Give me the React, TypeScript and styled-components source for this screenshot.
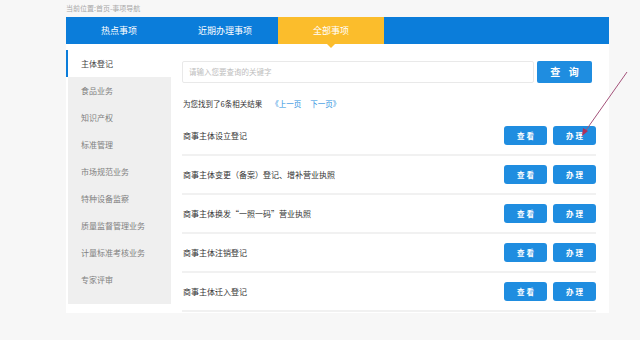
import styled, { createGlobalStyle } from "styled-components";

const GlobalStyle = createGlobalStyle`
  body {
    margin: 0;
    background: #f7f7f7;
    font-family: "Noto Sans CJK SC", "Noto Sans", sans-serif;
  }
`

const Page = styled.div`
  position: relative;
  width: 543px;
  padding-left: 66px;
  height: 340px;
`

const Breadcrumb = styled.div`
  height: 17px;
  line-height: 16px;
  font-size: 7px;
  color: #a8a8a8;
`

const TabBar = styled.div`
  display: flex;
  height: 27px;
  background: #0b7dda;
`

const Tab = styled.div<{ $active?: boolean }>`
  position: relative;
  width: 106px;
  line-height: 27px;
  text-align: center;
  font-size: 9px;
  color: #fff;
  background: ${p => (p.$active ? "#fbbd2c" : "transparent")};

  ${p => p.$active && `
    &::after {
      content: "";
      position: absolute;
      left: 50%;
      bottom: -4px;
      margin-left: -4px;
      border-left: 4px solid transparent;
      border-right: 4px solid transparent;
      border-top: 4px solid #fbbd2c;
    }
  `}
`

const Panel = styled.div`
  display: flex;
  align-items: flex-start;
  background: #fff;
  padding: 6px 13px 1px 2px;
`

const Sidebar = styled.div`
  width: 103px;
  background: #efefef;
  padding-bottom: 11px;
`

const SideItem = styled.div<{ $active?: boolean }>`
  position: relative;
  height: 27px;
  line-height: 27px;
  padding-left: 13px;
  font-size: 8px;
  color: ${p => (p.$active ? "#444" : "#808080")};
  background: ${p => (p.$active ? "#fff" : "transparent")};

  ${p => p.$active && `
    &::before {
      content: "";
      position: absolute;
      left: -2px;
      top: 0;
      bottom: 0;
      width: 2px;
      background: #0b7dda;
    }
  `}
`

const Content = styled.div`
  flex: 1;
  margin-left: 11px;
  padding-top: 11px;
`

const SearchRow = styled.div`
  display: flex;
  gap: 3px;
  height: 22px;
  margin-right: 4px;
`

const SearchInput = styled.div`
  flex: 1;
  border: 1px solid #e9e9e9;
  border-radius: 2px;
  padding-left: 6px;
  line-height: 20px;
  font-size: 7.5px;
  color: #bdbdbd;
`

const SearchButton = styled.div`
  width: 55px;
  border-radius: 2px;
  background: #1f8de0;
  color: #fff;
  font-size: 10px;
  font-weight: bold;
  text-align: center;
  line-height: 22px;
  letter-spacing: 3px;
  text-indent: 3px;
`

const ResultInfo = styled.div`
  margin: 14px 0 6px 1px;
  line-height: 14px;
  font-size: 7.5px;
  color: #333;
`

const PageLink = styled.span`
  color: #2b8fe0;
  margin-left: 9px;
`

const Row = styled.div`
  display: flex;
  align-items: center;
  justify-content: space-between;
  height: 37px;
  border-bottom: 2px solid #f1f1f1;
`

const RowTitle = styled.div`
  padding-left: 1px;
  font-size: 8px;
  color: #333;
`

const Actions = styled.div`
  display: flex;
  gap: 6px;
`

const ActionButton = styled.div`
  width: 43px;
  height: 19px;
  line-height: 19px;
  border-radius: 3px;
  background: #1f8de0;
  color: #fff;
  font-size: 7.5px;
  font-weight: bold;
  text-align: center;
  letter-spacing: 2px;
  text-indent: 2px;
`

const Annotation = styled.svg`
  position: absolute;
  left: 570px;
  top: 66px;
  pointer-events: none;
`

const tabs = ["热点事项", "近期办理事项", "全部事项"]

const sideItems = [
  "主体登记",
  "食品业务",
  "知识产权",
  "标准管理",
  "市场规范业务",
  "特种设备监察",
  "质量监督管理业务",
  "计量标准考核业务",
  "专家评审",
]

const items = [
  "商事主体设立登记",
  "商事主体变更（备案）登记、增补营业执照",
  "商事主体换发“一照一码”营业执照",
  "商事主体注销登记",
  "商事主体迁入登记",
]

export default function App() {
  return (
    <>
      <GlobalStyle />
      <Page>
        <Breadcrumb>当前位置:首页-事项导航</Breadcrumb>
        <TabBar>
          {tabs.map((t, i) => (
            <Tab key={t} $active={i === 2}>{t}</Tab>
          ))}
        </TabBar>

        <Panel>
          <Sidebar>
            {sideItems.map((s, i) => (
              <SideItem key={s} $active={i === 0}>{s}</SideItem>
            ))}
          </Sidebar>

          <Content>
            <SearchRow>
              <SearchInput>请输入您要查询的关键字</SearchInput>
              <SearchButton>查 询</SearchButton>
            </SearchRow>

            <ResultInfo>
              为您找到了6条相关结果
              <PageLink>《上一页</PageLink>
              <PageLink>下一页》</PageLink>
            </ResultInfo>

            {items.map(item => (
              <Row key={item}>
                <RowTitle>{item}</RowTitle>
                <Actions>
                  <ActionButton>查看</ActionButton>
                  <ActionButton>办理</ActionButton>
                </Actions>
              </Row>
            ))}
          </Content>
        </Panel>

        <Annotation width="64" height="74" viewBox="0 0 64 74">
          <line x1="57" y1="6" x2="14" y2="67" stroke="#a4527a" strokeWidth="1" />
          <path d="M12 70 L13 62 L18 65 Z" fill="#b0305a" />
        </Annotation>
      </Page>
    </>
  )
}
